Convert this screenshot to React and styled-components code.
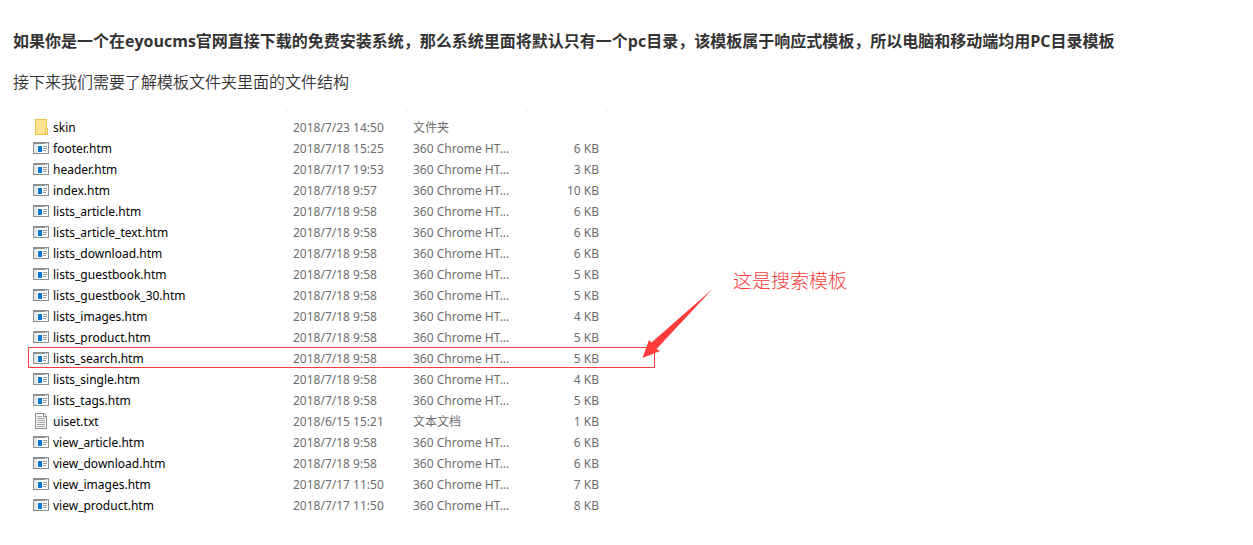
import styled, { createGlobalStyle } from "styled-components";

const CHROME = "360 Chrome HT...";

const files = [
	{ name: "skin", date: "2018/7/23 14:50", type: "文件夹", size: "", icon: "folder" },
	{ name: "footer.htm", date: "2018/7/18 15:25", type: CHROME, size: "6 KB" },
	{ name: "header.htm", date: "2018/7/17 19:53", type: CHROME, size: "3 KB" },
	{ name: "index.htm", date: "2018/7/18 9:57", type: CHROME, size: "10 KB" },
	{ name: "lists_article.htm", date: "2018/7/18 9:58", type: CHROME, size: "6 KB" },
	{ name: "lists_article_text.htm", date: "2018/7/18 9:58", type: CHROME, size: "6 KB" },
	{ name: "lists_download.htm", date: "2018/7/18 9:58", type: CHROME, size: "6 KB" },
	{ name: "lists_guestbook.htm", date: "2018/7/18 9:58", type: CHROME, size: "5 KB" },
	{ name: "lists_guestbook_30.htm", date: "2018/7/18 9:58", type: CHROME, size: "5 KB" },
	{ name: "lists_images.htm", date: "2018/7/18 9:58", type: CHROME, size: "4 KB" },
	{ name: "lists_product.htm", date: "2018/7/18 9:58", type: CHROME, size: "5 KB" },
	{ name: "lists_search.htm", date: "2018/7/18 9:58", type: CHROME, size: "5 KB", marked: true },
	{ name: "lists_single.htm", date: "2018/7/18 9:58", type: CHROME, size: "4 KB" },
	{ name: "lists_tags.htm", date: "2018/7/18 9:58", type: CHROME, size: "5 KB" },
	{ name: "uiset.txt", date: "2018/6/15 15:21", type: "文本文档", size: "1 KB", icon: "text" },
	{ name: "view_article.htm", date: "2018/7/18 9:58", type: CHROME, size: "6 KB" },
	{ name: "view_download.htm", date: "2018/7/18 9:58", type: CHROME, size: "6 KB" },
	{ name: "view_images.htm", date: "2018/7/17 11:50", type: CHROME, size: "7 KB" },
	{ name: "view_product.htm", date: "2018/7/17 11:50", type: CHROME, size: "8 KB" },
];

function FileIcon({ kind }) {
	if (kind === "folder") {
		return (
			<Icon viewBox="0 0 16 16" aria-hidden="true">
				<path d="M2 0h12v9h1v7H2z" fill="#e8c24a" />
				<path d="M3 1h10v14H3z" fill="#ffe391" />
				<path d="M13 10h1v5h-1z" fill="#ffe9a8" />
				<path d="M12 10h1v5h-1z" fill="#e8c24a" />
			</Icon>
		);
	}
	if (kind === "text") {
		return (
			<Icon viewBox="0 0 16 16" aria-hidden="true">
				<path d="M2 0h9l3 3v13H2z" fill="#8c8c8c" />
				<path d="M3 1h7v3h3v11H3z" fill="#fafafa" />
				<path d="M11 1l2 2h-2z" fill="#fff" />
				<path d="M4 3h5v1H4zM4 5h8v1H4zM4 7h8v1H4zM4 9h8v1H4zM4 11h8v1H4zM4 13h8v1H4z" fill="#a6a6a6" />
			</Icon>
		);
	}
	return (
		<Icon viewBox="0 0 16 16" aria-hidden="true">
			<path d="M0 2h16v12H0z" fill="#8a8f94" />
			<path d="M1 4h14v9H1z" fill="#fff" />
			<path d="M1 4h3v9H1z" fill="#e4e6e8" />
			<path d="M5 6h4v6H5z" fill="#0078d7" />
			<path d="M10 6h4v1h-4zM10 8h4v1h-4zM10 10h3v1h-3z" fill="#9a9a9a" />
			<path d="M12 3h1v1h-1zM14 3h1v1h-1z" fill="#fff" />
		</Icon>
	);
}

function FileRow({ file }) {
	return (
		<Row $marked={file.marked}>
			<NameCell>
				<FileName>
					<FileIcon kind={file.icon} />
					{file.name}
				</FileName>
			</NameCell>
			<Cell>{file.date}</Cell>
			<Cell>{file.type}</Cell>
			<Cell $right>{file.size}</Cell>
			<td />
		</Row>
	);
}

function HeadCell({ label }) {
	return (
		<Head aria-label={label}>
			<Divider />
		</Head>
	);
}

function App() {
	return (
		<>
			<GlobalStyle />
			<Article>
				<Lead>
					如果你是一个在eyoucms官网直接下载的免费安装系统，那么系统里面将默认只有一个pc目录，该模板属于响应式模板，所以电脑和移动端均用PC目录模板
				</Lead>
				<Paragraph>接下来我们需要了解模板文件夹里面的文件结构</Paragraph>
				<Figure>
					<FileTable>
						<colgroup>
							<Col $width={259} />
							<Col $width={120} />
							<Col $width={120} />
							<Col $width={80} />
							<Col $width={48} />
						</colgroup>
						<thead>
							<tr>
								<HeadCell label="名称" />
								<HeadCell label="修改日期" />
								<HeadCell label="类型" />
								<HeadCell label="大小" />
								<td />
							</tr>
						</thead>
						<tbody>
							{files.map((file) => (
								<FileRow key={file.name} file={file} />
							))}
						</tbody>
					</FileTable>
					<Arrow viewBox="0 0 72 70" aria-hidden="true">
						<path d="M0.500 69L7 51l2.500 2.500L70.500 0L14.500 60L18 62z" fill="#ff3b3b" />
					</Arrow>
					<Note>这是搜索模板</Note>
				</Figure>
			</Article>
		</>
	);
}

export default App;

const GlobalStyle = createGlobalStyle`
	body {
		margin: 0;
		background-color: #fff;
		color: #333;
		font-family: "Open Sans", "Noto Sans CJK SC", sans-serif;
	}
`;

const Article = styled.main`
	padding: 29px 13px 28px;
`;

const Paragraph = styled.p`
	margin: 0 0 15px;
	font-size: 16px;
	font-weight: 350;
	line-height: 24px;
`;

const Lead = styled(Paragraph)`
	margin-bottom: 17px;
	font-weight: bold;
`;

const Figure = styled.figure`
	position: relative;
	width: fit-content;
	margin: 0 0 0 15px;
`;

const FileTable = styled.table`
	table-layout: fixed;
	width: 627px;
	border-collapse: separate;
	border-spacing: 0;
	font-family: "Noto Sans", "Noto Sans CJK SC", sans-serif;
	font-size: 12px;
	line-height: 19px;

	td {
		padding: 0;
	}
`;

const Col = styled.col`
	width: ${({ $width }) => $width}px;
`;

const Head = styled.th`
	padding: 0 0 5px;
`;

const Divider = styled.div`
	height: 2px;
	border-right: 1px solid #e2e2e2;
`;

const Row = styled.tr`
	outline: ${({ $marked }) => ($marked ? "1px solid #f33b3b" : "none")};
	outline-offset: -1px;
`;

const Cell = styled.td`
	color: #6d6d6d;
	text-align: ${({ $right }) => ($right ? "right" : "left")};
	white-space: nowrap;

	&& {
		padding: 2px 8px 0 6px;
	}
`;

const NameCell = styled.td`
	color: #000;
	white-space: nowrap;

	&& {
		padding: 2px 0 0 5px;
	}
`;

const FileName = styled.div`
	display: flex;
	align-items: flex-start;
	gap: 4px;
	height: 19px;
`;

const Icon = styled.svg`
	flex: none;
	width: 16px;
	height: 16px;
	margin-top: 1px;
`;

const Arrow = styled.svg`
	position: absolute;
	top: 180px;
	left: 614px;
	width: 72px;
	height: 70px;
`;

const Note = styled.figcaption`
	position: absolute;
	top: 161px;
	left: 705px;
	color: #ff3b3b;
	font-family: "Liberation Serif", "Noto Sans CJK SC", serif;
	font-size: 19px;
	font-weight: 300;
	line-height: 24px;
	white-space: nowrap;
`;
